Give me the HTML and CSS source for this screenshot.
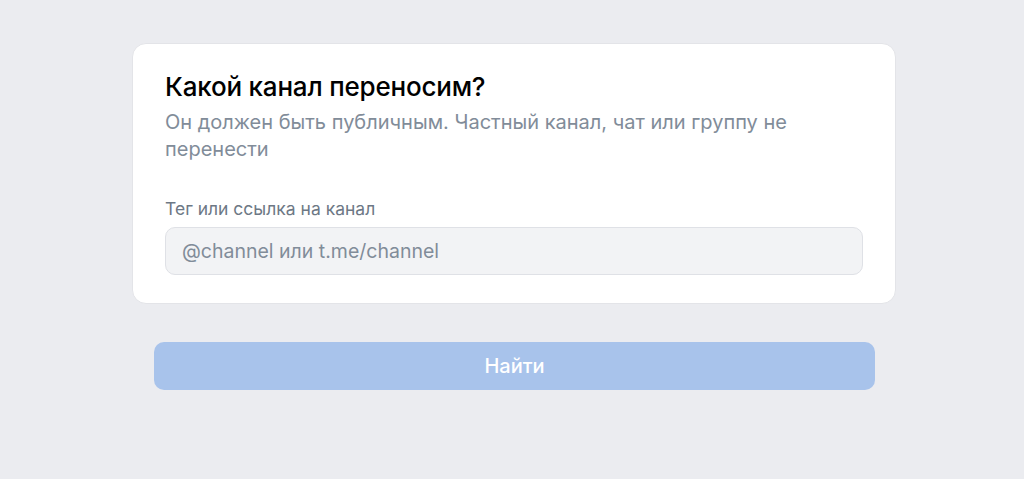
FILE: index.html
```html
<!DOCTYPE html>
<html lang="ru">

<head>
    <meta charset="UTF-8">
    <title>Перенос канала</title>
    <meta name="viewport" content="width=device-width,initial-scale=1">
    <link rel="stylesheet" href="styles.css">
</head>

<body>
    <div class="page">
        <form class="card" autocomplete="off">
            <h2 class="title">Какой канал переносим?</h2>
            <p class="subtitle">Он должен быть публичным. Частный канал, чат или группу не перенести</p>
            <label class="field">
                <span class="field-label">Тег или ссылка на канал</span>
                <input class="input" type="text" placeholder="@channel или t.me/channel">
            </label>
        </form>
        <div class="actions">
            <button class="btn" type="button" disabled>Найти</button>
        </div>
    </div>
</body>

</html>
```

FILE: styles.css
```css
body {
    background: #ebecf0;
    font-family: Inter, 'Noto Sans', Arial, sans-serif;
    margin: 0;
}

.page {
    width: 764px;
    margin: 0 0 0 calc(50% - 380px);
    padding-top: 43px;
}

.card {
    background: #fff;
    border: 1px solid #e3e4e8;
    border-radius: 14px;
    padding: 28px 32px 28px 32px;
}

.title {
    margin: 0;
    font-size: 26px;
    font-weight: 500;
    line-height: 30px;
    color: #000;
    letter-spacing: -0.2px;
}

.subtitle {
    margin: 7px 0 0 0;
    font-size: 20px;
    line-height: 27px;
    color: #818c99;
    max-width: 660px;
}

.field {
    display: block;
    margin-top: 36px;
}

.field-label {
    display: block;
    font-size: 17.5px;
    line-height: 20px;
    color: #6d7885;
    margin-bottom: 8px;
}

.input {
    width: 100%;
    height: 48px;
    box-sizing: border-box;
    padding: 0 16px;
    background: #f2f3f5;
    border: 1px solid #dfe1e6;
    border-radius: 10px;
    font-family: inherit;
    font-size: 19.5px;
    color: #000;
    outline: none;
}

.input::placeholder {
    color: #818c99;
}

.actions {
    padding: 38px 21px 0 22px;
}

.btn {
    width: 100%;
    height: 48px;
    background: #a8c3eb;
    color: #fff;
    border: none;
    border-radius: 10px;
    font-family: inherit;
    font-size: 20px;
    font-weight: 500;
    cursor: not-allowed;
}
```
